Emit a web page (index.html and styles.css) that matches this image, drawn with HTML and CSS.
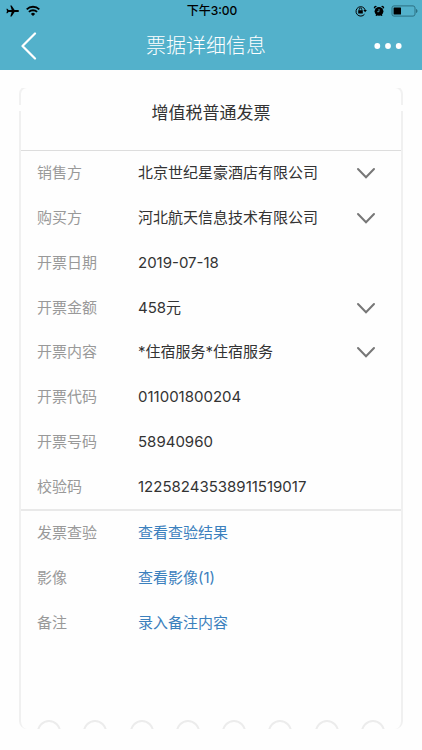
FILE: index.html
```html
<!DOCTYPE html>
<html lang="zh-CN">
<head>
<meta charset="utf-8">
<meta name="viewport" content="width=device-width, initial-scale=1">
<title>票据详细信息</title>
<link rel="stylesheet" href="styles.css">
</head>
<body>
<header class="top">
  <div class="status">
    <div class="status-side">
      <svg width="14" height="12" viewBox="0 0 14 12" aria-hidden="true"><path d="M13 6c0-.6-.7-1-1.500-1H8.600L5.600.5H4.300L5.700 5H2.600L1.400 3.700H.4L1 6 .4 8.300h1L2.600 7h3.100L4.300 11.500h1.300L8.600 7h2.900c.8 0 1.500-.4 1.500-1z"/></svg>
      <svg width="14" height="12" viewBox="0 0 14 12" fill="none" stroke="#000" stroke-width="1.800" aria-hidden="true"><path d="M.7 4.300a9 9 0 0 1 12.600 0M2.900 6.900a5.900 5.900 0 0 1 8.200 0"/><path d="M7 11 4.900 8.900a3 3 0 0 1 4.200 0z" fill="#000" stroke="none"/></svg>
    </div>
    <time class="clock">下午3:00</time>
    <div class="status-side status-right">
      <svg width="12" height="12" viewBox="0 0 12 12" aria-hidden="true"><path d="M9.500 9.200A4.700 4.700 0 1 1 10.200 5" fill="none" stroke="#000"/><path d="M8.300 5h3.600l-1.800 2.300zM3.200 5.300h4.600v3.200H3.200z"/><path d="M4.200 5.500V4.300a1.300 1.300 0 0 1 2.600 0v1.200" fill="none" stroke="#000" stroke-width=".9"/></svg>
      <svg width="12" height="12" viewBox="0 0 12 12" aria-hidden="true"><circle cx="6" cy="6.300" r="4.400"/><path d="M1 3.700A2 2 0 0 1 3.900 1.200zM11 3.700A2 2 0 0 0 8.100 1.200zM2.600 11l.6-1.700 1.200.6-.9 1.100zM9.400 11l-.6-1.700-1.200.6.9 1.100z"/><path d="M6 4v2.700H4.200" fill="none" stroke="#53b1cb" stroke-width=".8"/></svg>
      <svg width="27" height="12" viewBox="0 0 27 12" aria-hidden="true"><rect x="1" y=".9" width="23" height="10.200" rx="2" fill="none" stroke="#2d7183"/><rect x="2.600" y="2.500" width="7.400" height="7" rx=".5"/><path d="M25 4v4c.9-.3 1.500-1 1.500-2S25.900 4.300 25 4z" fill="#2d7183"/></svg>
    </div>
  </div>
  <nav class="bar">
    <button class="bar-button" type="button" aria-label="返回">
      <svg width="18" height="28" viewBox="0 0 18 28" fill="none" stroke="#fff" stroke-width="2.200" stroke-linecap="round" stroke-linejoin="round"><path d="M15 1.500 2.500 14 15 26.500"/></svg>
    </button>
    <h1>票据详细信息</h1>
    <button class="bar-button" type="button" aria-label="更多">
      <svg width="28" height="8" viewBox="0 0 28 8" fill="#fff"><circle cx="3.300" cy="4" r="2.900"/><circle cx="14" cy="4" r="2.900"/><circle cx="24.700" cy="4" r="2.900"/></svg>
    </button>
  </nav>
</header>
<main class="ticket">
  <div class="ticket-edge"></div>
  <div class="ticket-body">
    <h2>增值税普通发票</h2>
    <dl class="rows rows-main">
      <div class="row"><dt>销售方</dt><dd>北京世纪星豪酒店有限公司</dd><dd><button class="expand" type="button" aria-label="展开销售方"><svg width="20" height="12" viewBox="0 0 20 12"><path d="M2 2 10 10.200 18 2"/></svg></button></dd></div>
      <div class="row"><dt>购买方</dt><dd>河北航天信息技术有限公司</dd><dd><button class="expand" type="button" aria-label="展开购买方"><svg width="20" height="12" viewBox="0 0 20 12"><path d="M2 2 10 10.200 18 2"/></svg></button></dd></div>
      <div class="row"><dt>开票日期</dt><dd>2019-07-18</dd></div>
      <div class="row"><dt>开票金额</dt><dd>458元</dd><dd><button class="expand" type="button" aria-label="展开开票金额"><svg width="20" height="12" viewBox="0 0 20 12"><path d="M2 2 10 10.200 18 2"/></svg></button></dd></div>
      <div class="row"><dt>开票内容</dt><dd>*住宿服务*住宿服务</dd><dd><button class="expand" type="button" aria-label="展开开票内容"><svg width="20" height="12" viewBox="0 0 20 12"><path d="M2 2 10 10.200 18 2"/></svg></button></dd></div>
      <div class="row"><dt>开票代码</dt><dd>011001800204</dd></div>
      <div class="row"><dt>开票号码</dt><dd>58940960</dd></div>
      <div class="row"><dt>校验码</dt><dd>12258243538911519017</dd></div>
    </dl>
    <dl class="rows rows-links">
      <div class="row"><dt>发票查验</dt><dd><a href="#verify">查看查验结果</a></dd></div>
      <div class="row"><dt>影像</dt><dd><a href="#images">查看影像(1)</a></dd></div>
      <div class="row"><dt>备注</dt><dd><a href="#remark">录入备注内容</a></dd></div>
    </dl>
  </div>
  <div class="ticket-foot">
    <div class="notches"><i></i><i></i><i></i><i></i><i></i><i></i><i></i><i></i></div>
  </div>
</main>
</body>
</html>
```
FILE: styles.css
```css
* {
  box-sizing: border-box;
}

body {
  display: flex;
  flex-direction: column;
  min-height: 100vh;
  margin: 0;
  background: #fefefe;
  color: #333;
  font-family: Inter, "Noto Sans CJK SC", sans-serif;
  font-size: 15px;
  line-height: 20px;
}

h1,
h2,
dl,
dd {
  margin: 0;
  font-weight: 400;
}

button {
  display: flex;
  align-items: center;
  padding: 0;
  border: 0;
  background: none;
}

svg {
  display: block;
}

.top {
  background: #53b1cb;
}

.status {
  display: grid;
  grid-template-columns: 1fr auto 1fr;
  align-items: center;
  height: 22px;
  padding: 0 4px 0 6px;
}

.status-side {
  display: flex;
  align-items: center;
  gap: 6px;
}

.status-right {
  justify-content: flex-end;
}

.clock {
  color: #000;
  font-size: 12px;
  font-weight: 500;
}

.bar {
  display: flex;
  align-items: center;
  justify-content: space-between;
  height: 48px;
  padding: 0 20px;
}

.bar h1 {
  color: #fff;
  font-size: 20px;
  font-weight: 300;
  line-height: 28px;
}

.ticket {
  display: flex;
  flex: 1;
  flex-direction: column;
  margin: 18px 19px 21px;
}

.ticket-edge {
  height: 17px;
  overflow: hidden;
}

.ticket-edge::before {
  content: "";
  display: block;
  height: 40px;
  margin-top: -2px;
  border: 2px solid #f1f1f1;
  border-radius: 8px;
}

.ticket-body {
  flex: 1;
  margin-top: 6px;
  border: solid #f0f0f0;
  border-width: 0 2px;
}

h2 {
  margin-top: -8px;
  padding-bottom: 27px;
  font-size: 17px;
  line-height: 20px;
  text-align: center;
}

.rows {
  display: grid;
  grid-auto-rows: 1fr;
  padding: 0 16px;
  border-top: 1px solid #ddd;
}

.rows-main {
  min-height: 359px;
}

.rows-links {
  min-height: 136px;
  border-top: 2px solid #e9e9e9;
}

.row {
  display: grid;
  grid-template-columns: 101px 1fr auto;
  align-items: center;
}

dt {
  color: #999;
}

a {
  color: #3b80bd;
  text-decoration: none;
}

.expand {
  width: 29px;
  height: 28px;
}

.expand path {
  fill: none;
  stroke: #777;
  stroke-width: 2;
  stroke-linecap: round;
}

.ticket-foot {
  height: 9px;
  overflow: hidden;
  border: solid #f0f0f0;
  border-width: 0 2px;
  border-radius: 0 0 8px 8px;
}

.notches {
  display: flex;
  justify-content: space-between;
  padding: 0 16px;
}

.notches i {
  width: 24px;
  height: 24px;
  border: 2px solid #ececec;
  border-radius: 50%;
}
```
